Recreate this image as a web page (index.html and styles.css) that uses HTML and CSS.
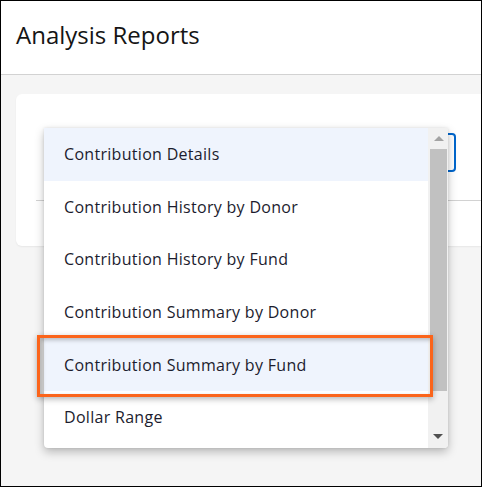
FILE: index.html
```html
<!DOCTYPE html>
<html>
<head>
<meta charset="utf-8">
<link rel="stylesheet" href="styles.css">
</head>
<body>
<div class="frame">
  <div class="header"><h1 class="title">Analysis Reports</h1></div>
  <div class="content">
    <div class="card">
      <div class="select"></div>
      <div class="divider"></div>
    </div>
  </div>
  <div class="dropdown">
    <ul class="list">
      <li class="item active">Contribution Details</li>
      <li class="item">Contribution History by Donor</li>
      <li class="item">Contribution History by Fund</li>
      <li class="item">Contribution Summary by Donor</li>
      <li class="item active">Contribution Summary by Fund</li>
      <li class="item">Dollar Range</li>
    </ul>
    <div class="scrollbar">
      <div class="arrow up"></div>
      <div class="thumb"></div>
      <div class="arrow down"></div>
    </div>
  </div>
  <div class="annotation"></div>
</div>
</body>
</html>
```
FILE: styles.css
```css
html, body { margin: 0; padding: 0; }
body { font-family: "Open Sans", "Liberation Sans", sans-serif; color: #151515; }
.frame {
  width: 482px; height: 487px; box-sizing: border-box;
  border: 1px solid #000; background: #f5f5f5;
  position: relative; overflow: hidden;
}
.header {
  height: 73px; background: #fff; border-bottom: 1px solid #d2d2d2;
  display: flex; align-items: center; padding-left: 15px;
}
.title { margin: 0; font-weight: 400; font-size: 24px; position: relative; top: -3px; color: #151515; }
.content { padding: 19px 0 0 15px; }
.card {
  background: #fff; border-radius: 6px 0 0 6px; height: 152px;
  padding: 39px 0 0 20px; box-sizing: border-box;
  box-shadow: 0 1px 2px rgba(0,0,0,0.06);
}
.select {
  margin-left: 14px;
  width: 406px; height: 39px; box-sizing: border-box;
  border: 2px solid #0066cc; border-radius: 4px;
}
.divider { margin-top: 28px; height: 1px; background: #d2d2d2; }
.dropdown {
  position: absolute; left: 43px; top: 127px; width: 404px; height: 320px;
  background: #fff; border-radius: 0 0 4px 4px; overflow: hidden;
  display: flex;
  box-shadow: 0 4px 10px rgba(0,0,0,0.25), 0 0 3px rgba(0,0,0,0.1);
}
.list { list-style: none; margin: 0; padding: 0; width: 384px; }
.item {
  height: 52.6px; display: flex; align-items: center; padding-left: 20px;
  font-size: 16px; letter-spacing: 0.3px; color: #1c1c2e; white-space: nowrap;
}
.item.active { background: #eff4fd; }
.scrollbar { width: 20px; background: #f1f1f1; position: relative; display: flex; flex-direction: column; }
.arrow { height: 20px; position: relative; }
.arrow.up::after {
  content: ""; position: absolute; left: 6px; top: 8px;
  border-left: 5px solid transparent; border-right: 5px solid transparent;
  border-bottom: 5px solid #a3a3a3;
}
.arrow.down { position: absolute; bottom: 0; left: 0; width: 20px; }
.arrow.down::after {
  content: ""; position: absolute; left: 5px; top: 6px;
  border-left: 5px solid transparent; border-right: 5px solid transparent;
  border-top: 5px solid #505050;
}
.thumb { margin: 1px 1px 0 2px; height: 242px; background: #c1c1c1; }
.annotation {
  position: absolute; left: 36px; top: 334px; width: 396px; height: 62px;
  box-sizing: border-box; border: 3px solid #fb641a;
  box-shadow: 0 2px 6px rgba(0,0,0,0.3), inset 2px 2px 4px rgba(0,0,0,0.25);
}
```
